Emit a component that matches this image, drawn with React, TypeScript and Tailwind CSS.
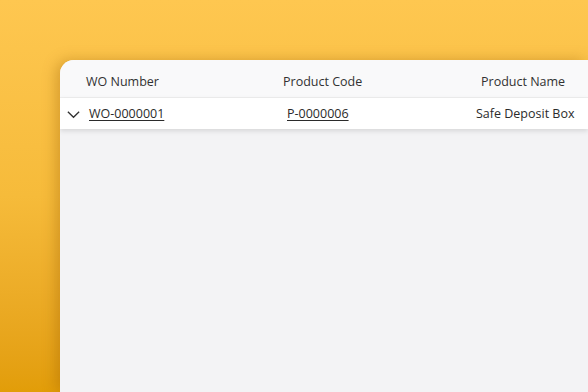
import React from 'react';

export default function App() {
  return (
    <div
      className="w-[588px] h-[392px] overflow-hidden bg-gradient-to-b from-[#fec750] via-[#f6bb3a] to-[#e29d08] pl-[60px] pt-[60px]"
      style={{ fontFamily: '"Open Sans", "Noto Sans", sans-serif' }}
    >
      <div className="h-[332px] rounded-tl-[14px] bg-[#f3f3f5] shadow-[-4px_0_14px_rgba(150,90,0,0.35)] overflow-hidden">
        {/* header */}
        <div className="flex h-[38px] items-center bg-[#f9f9fa] pt-[8px] text-[12.5px] text-[#323232] border-b border-[#efefef]">
          <div className="w-[199px] pl-[26px]">WO Number</div>
          <div className="w-[198px] pl-[24px]">Product Code</div>
          <div className="flex-1 pl-[24px]">Product Name</div>
        </div>
        {/* row */}
        <div className="flex h-[31px] items-center pt-[2px] bg-white text-[12.5px] text-[#2b2b2b] shadow-[0_2px_5px_rgba(0,0,0,0.12)]">
          <div className="w-[199px] flex items-center pl-[6px] gap-[8px]">
            <svg width="15" height="15" viewBox="0 0 16 16" fill="none" stroke="#333" strokeWidth="1.4">
              <path d="M2 5 L8 11 L14 5" />
            </svg>
            <span className="underline underline-offset-2">WO-0000001</span>
          </div>
          <div className="w-[198px] pl-[28px]">
            <span className="underline underline-offset-2">P-0000006</span>
          </div>
          <div className="flex-1 pl-[19px] whitespace-nowrap">Safe Deposit Box</div>
        </div>
      </div>
    </div>
  );
}
